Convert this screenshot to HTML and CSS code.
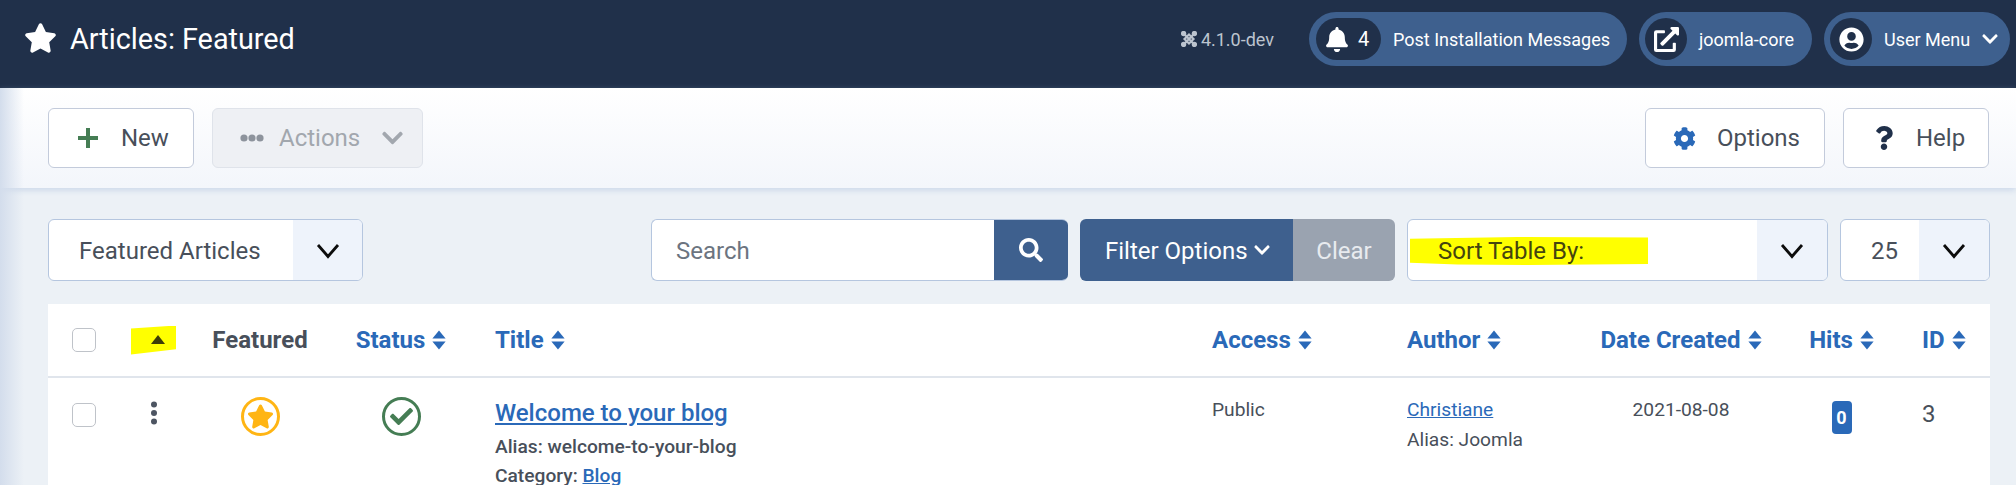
FILE: index.html
```html
<!DOCTYPE html>
<html lang="en">
<head>
<meta charset="utf-8">
<title>Articles: Featured</title>
<link rel="stylesheet" href="styles.css">
</head>
<body>
<svg class="defs" aria-hidden="true">
  <symbol id="i-star" viewBox="0 0 576 512"><path d="M259.3 17.8L194 150.2 47.9 171.5c-26.2 3.8-36.7 36.1-17.7 54.6l105.7 103-25 145.5c-4.5 26.3 23.2 46 46.4 33.7L288 439.6l130.7 68.7c23.2 12.2 50.9-7.4 46.4-33.7l-25-145.5 105.7-103c19-18.5 8.5-50.8-17.7-54.6L382 150.2 316.7 17.8c-11.7-23.6-45.6-23.9-57.4 0z"/></symbol>
  <symbol id="i-chev" viewBox="0 0 448 512"><path d="M207.029 381.476L12.686 187.132c-9.373-9.373-9.373-24.569 0-33.941l22.667-22.667c9.357-9.357 24.522-9.375 33.901-.04L224 284.505l154.745-154.021c9.379-9.335 24.544-9.317 33.901.04l22.667 22.667c9.373 9.373 9.373 24.569 0 33.941L240.971 381.476c-9.373 9.372-24.569 9.372-33.942 0z"/></symbol>
  <symbol id="i-thin" viewBox="0 0 24 16"><path d="M2 2L12 13.5L22 2"/></symbol>
  <symbol id="i-sort" viewBox="0 0 14 20"><path d="M7 0.5L13.6 8.5H0.4Z"/><path d="M0.4 11.5H13.6L7 19.5Z"/></symbol>
  <symbol id="i-caret" viewBox="0 0 16 20"><path d="M15 14H1L8 5Z"/></symbol>
</svg>

<header class="topbar">
  <svg class="title-star"><use href="#i-star"/></svg>
  <h1 class="page-title">Articles: Featured</h1>
  <div class="version">
    <svg class="joomla-mark" viewBox="0 0 16 16"><path d="M3.5 3.5L12.5 12.5M12.5 3.5L3.5 12.5M3.5 8L8 3.5L12.5 8L8 12.5Z"/><circle cx="2.6" cy="2.6" r="1.6"/><circle cx="13.4" cy="2.6" r="1.6"/><circle cx="2.6" cy="13.4" r="1.6"/><circle cx="13.4" cy="13.4" r="1.6"/></svg>
    <span>4.1.0-dev</span>
  </div>
  <a class="pill pill-post">
    <span class="pill-badge pill-badge-wide">
      <svg class="bell" viewBox="0 0 448 512"><path d="M224 512c35.32 0 63.97-28.65 63.97-64H160.03c0 35.35 28.65 64 63.97 64zm215.39-149.71c-19.32-20.76-55.47-51.99-55.47-154.29 0-77.7-54.48-139.9-127.94-155.16V32c0-17.67-14.32-32-31.98-32s-31.98 14.33-31.98 32v20.84C118.56 68.1 64.08 130.3 64.08 208c0 102.3-36.15 133.53-55.47 154.29-6 6.45-8.66 14.16-8.61 21.71.11 16.4 12.98 32 32.1 32h383.8c19.12 0 32-15.6 32.1-32 .05-7.55-2.61-15.27-8.61-21.71z"/></svg>
      <span class="count">4</span>
    </span>
    <span class="pill-label">Post Installation Messages</span>
  </a>
  <a class="pill pill-site">
    <span class="pill-badge">
      <svg class="pill-icon" viewBox="0 0 512 512"><path d="M432,320H400a16,16,0,0,0-16,16V448H64V128H208a16,16,0,0,0,16-16V80a16,16,0,0,0-16-16H48A48,48,0,0,0,0,112V464a48,48,0,0,0,48,48H400a48,48,0,0,0,48-48V336A16,16,0,0,0,432,320ZM488,0h-128c-21.37,0-32.05,25.91-17,41l35.73,35.73L135,320.37a24,24,0,0,0,0,34L157.67,377a24,24,0,0,0,34,0L435.28,133.32,471,169c15,15,41,4.5,41-17V24A24,24,0,0,0,488,0Z"/></svg>
    </span>
    <span class="pill-label">joomla-core</span>
  </a>
  <a class="pill pill-user">
    <span class="pill-badge">
      <svg class="pill-icon" viewBox="0 0 496 512"><path d="M248 8C111 8 0 119 0 256s111 248 248 248 248-111 248-248S385 8 248 8zm0 96c48.6 0 88 39.4 88 88s-39.4 88-88 88-88-39.4-88-88 39.4-88 88-88zm0 344c-58.7 0-111.3-26.6-146.5-68.2 18.8-35.4 55.6-59.8 98.5-59.8 2.4 0 4.8.4 7.1 1.1 13 4.2 26.6 6.9 40.9 6.9 14.3 0 28-2.7 40.9-6.9 2.3-.7 4.7-1.1 7.1-1.1 42.9 0 79.7 24.4 98.5 59.8C359.3 421.4 306.7 448 248 448z"/></svg>
    </span>
    <span class="pill-label">User Menu</span>
    <svg class="pill-chev"><use href="#i-chev"/></svg>
  </a>
</header>

<section class="toolbar">
  <button class="btn btn-new">
    <svg class="plus" viewBox="0 0 22 22"><path d="M11 1V21M1 11H21"/></svg>New
  </button>
  <button class="btn btn-actions">
    <svg class="dots" viewBox="0 0 24 8"><circle cx="4" cy="4" r="3.6"/><circle cx="12" cy="4" r="3.6"/><circle cx="20" cy="4" r="3.6"/></svg>Actions
    <svg class="actions-chev"><use href="#i-chev"/></svg>
  </button>
  <span class="toolbar-gap"></span>
  <button class="btn btn-options">
    <svg class="cog" viewBox="0 0 512 512"><path d="M487.4 315.7l-42.6-24.6c4.3-23.2 4.3-47 0-70.2l42.6-24.6c4.9-2.8 7.1-8.6 5.5-14-11.1-35.6-30-67.8-54.7-94.6-3.8-4.1-10-5.1-14.8-2.3L380.8 110c-17.9-15.4-38.5-27.3-60.8-35.1V25.8c0-5.6-3.9-10.5-9.4-11.7-36.7-8.2-74.3-7.8-109.2 0-5.5 1.2-9.4 6.1-9.4 11.7V75c-22.2 7.9-42.8 19.8-60.8 35.1L88.7 85.5c-4.9-2.8-11-1.9-14.8 2.3-24.7 26.7-43.6 58.9-54.7 94.6-1.7 5.4.6 11.2 5.5 14L67.3 221c-4.3 23.2-4.3 47 0 70.2l-42.6 24.6c-4.9 2.8-7.1 8.6-5.5 14 11.1 35.6 30 67.8 54.7 94.6 3.8 4.1 10 5.1 14.8 2.3l42.6-24.6c17.9 15.4 38.5 27.3 60.8 35.1v49.2c0 5.6 3.9 10.5 9.4 11.7 36.7 8.2 74.3 7.8 109.2 0 5.5-1.2 9.4-6.1 9.4-11.7v-49.2c22.2-7.9 42.8-19.8 60.8-35.1l42.6 24.6c4.9 2.8 11 1.9 14.8-2.3 24.7-26.7 43.6-58.9 54.7-94.6 1.5-5.5-.7-11.3-5.6-14.1zM256 336c-44.1 0-80-35.9-80-80s35.9-80 80-80 80 35.9 80 80-35.9 80-80 80z"/></svg>Options
  </button>
  <button class="btn btn-help">
    <svg class="question" viewBox="0 0 384 512"><path d="M202.021 0C122.202 0 70.503 32.703 29.914 91.026c-7.363 10.58-5.093 25.086 5.178 32.874l43.138 32.709c10.373 7.865 25.132 6.026 33.253-4.148 25.049-31.381 43.63-49.449 82.757-49.449 30.764 0 68.816 19.799 68.816 49.631 0 22.552-18.617 34.134-48.993 51.164-35.423 19.86-82.299 44.576-82.299 106.405V320c0 13.255 10.745 24 24 24h72.471c13.255 0 24-10.745 24-24v-5.773c0-42.86 125.268-44.645 125.268-160.627C377.504 66.256 286.902 0 202.021 0zM192 373.459c-38.196 0-69.271 31.075-69.271 69.271 0 38.195 31.075 69.27 69.271 69.27s69.271-31.075 69.271-69.271-31.075-69.27-69.271-69.27z"/></svg>Help
  </button>
</section>

<main class="content">
  <div class="filters">
    <div class="select select-view">
      <span class="select-text">Featured Articles</span>
      <span class="select-arrow select-arrow-view"><svg><use href="#i-thin"/></svg></span>
    </div>
    <span class="filters-gap"></span>
    <div class="search">
      <span class="search-text">Search</span>
      <span class="search-btn"><svg viewBox="0 0 512 512"><path d="M505 442.7L405.3 343c-4.5-4.5-10.6-7-17-7H372c27.6-35.3 44-79.7 44-128C416 93.1 322.9 0 208 0S0 93.1 0 208s93.1 208 208 208c48.3 0 92.7-16.4 128-44v16.3c0 6.4 2.5 12.5 7 17l99.7 99.7c9.4 9.4 24.6 9.4 33.9 0l28.3-28.3c9.4-9.4 9.4-24.6.1-34zM208 336c-70.7 0-128-57.2-128-128 0-70.7 57.2-128 128-128 70.7 0 128 57.2 128 128 0 70.7-57.2 128-128 128z"/></svg></span>
    </div>
    <div class="filter-group">
      <span class="filter-options">Filter Options<svg><use href="#i-chev"/></svg></span>
      <span class="filter-clear">Clear</span>
    </div>
    <div class="select select-sort">
      <span class="marked">Sort Table By:</span>
      <span class="select-arrow select-arrow-sort"><svg><use href="#i-thin"/></svg></span>
    </div>
    <div class="select select-limit">
      <span class="select-text limit-text">25</span>
      <span class="select-arrow select-arrow-limit"><svg><use href="#i-thin"/></svg></span>
    </div>
  </div>

  <table class="articles">
    <colgroup>
      <col class="c-check"><col class="c-order"><col class="c-featured"><col class="c-status"><col class="c-title"><col class="c-access"><col class="c-author"><col class="c-date"><col class="c-hits"><col class="c-id">
    </colgroup>
    <thead>
      <tr>
        <th><span class="check"></span></th>
        <th class="order-head"><span class="order-mark"><svg><use href="#i-caret"/></svg></span></th>
        <th class="center plain">Featured</th>
        <th class="center">Status<svg class="sort"><use href="#i-sort"/></svg></th>
        <th class="title-col">Title<svg class="sort"><use href="#i-sort"/></svg></th>
        <th>Access<svg class="sort"><use href="#i-sort"/></svg></th>
        <th>Author<svg class="sort"><use href="#i-sort"/></svg></th>
        <th class="center">Date Created<svg class="sort"><use href="#i-sort"/></svg></th>
        <th class="center">Hits<svg class="sort"><use href="#i-sort"/></svg></th>
        <th>ID<svg class="sort"><use href="#i-sort"/></svg></th>
      </tr>
    </thead>
    <tbody>
      <tr>
        <td class="cell-check"><span class="check"></span></td>
        <td class="cell-dots"><svg class="kebab" viewBox="0 0 8 24"><circle cx="4" cy="3.6" r="3"/><circle cx="4" cy="12" r="3"/><circle cx="4" cy="20.4" r="3"/></svg></td>
        <td class="center cell-icon"><span class="ring ring-star"><svg><use href="#i-star"/></svg></span></td>
        <td class="center cell-icon"><span class="ring ring-check"><svg viewBox="0 0 512 512"><path d="M173.898 439.404l-166.4-166.4c-9.997-9.997-9.997-26.206 0-36.204l36.203-36.204c9.997-9.998 26.207-9.998 36.204 0L192 312.69 432.095 72.596c9.997-9.997 26.207-9.997 36.204 0l36.203 36.204c9.997 9.997 9.997 26.206 0 36.204l-294.4 294.401c-9.998 9.997-26.207 9.997-36.204-.001z"/></svg></span></td>
        <td class="cell-title title-col">
          <a class="article-link">Welcome to your blog</a>
          <div class="meta">Alias: welcome-to-your-blog</div>
          <div class="meta">Category: <a class="meta-link">Blog</a></div>
        </td>
        <td class="cell-text">Public</td>
        <td class="cell-text">
          <a class="author-link">Christiane</a>
          <div class="author-alias">Alias: Joomla</div>
        </td>
        <td class="cell-text center">2021-08-08</td>
        <td class="center cell-hits"><span class="badge">0</span></td>
        <td class="cell-id">3</td>
      </tr>
    </tbody>
  </table>
</main>
</body>
</html>
```

FILE: styles.css
```css
* { box-sizing: border-box; }

html, body {
  height: 100%;
  overflow: hidden;
}

body {
  margin: 0;
  position: relative;
  background: #ecf1f6;
  color: #484f5a;
  font-family: Roboto, "Liberation Sans", sans-serif;
  font-size: 20px;
}

body::after {
  content: "";
  position: absolute;
  left: 0;
  top: 88px;
  bottom: 0;
  width: 24px;
  background: linear-gradient(to right, #d3ddec, rgba(225, 232, 243, 0));
  pointer-events: none;
}

.defs { display: none; }

svg { fill: currentColor; }

/* Top bar */
.topbar {
  height: 88px;
  background: #20304a;
  color: #fff;
  display: flex;
  align-items: center;
  padding: 0 6px 10px 24px;
}

.title-star {
  width: 33px;
  height: 30px;
  margin-bottom: 2px;
}

.page-title {
  margin: 0 auto 0 13px;
  font-size: 28.8px;
  font-weight: 400;
}

.version {
  display: flex;
  align-items: center;
  gap: 4px;
  margin-right: 35px;
  font-size: 18px;
  color: #bcc4cf;
}

.joomla-mark {
  width: 16px;
  height: 16px;
  stroke: #bcc4cf;
  stroke-width: 2.2;
  fill: #bcc4cf;
}

.joomla-mark path { fill: none; }

.pill {
  height: 54px;
  border-radius: 27px;
  background: #3e608e;
  color: #fff;
  display: flex;
  align-items: center;
  padding-left: 6px;
  margin-left: 12px;
  font-size: 18px;
}

.pill-post { width: 318px; margin-left: 0; padding-left: 7px; }
.pill-site { width: 173px; }
.pill-user { width: 186px; }

.pill-badge {
  width: 42px;
  height: 42px;
  border-radius: 21px;
  background: #20304a;
  display: flex;
  align-items: center;
  justify-content: center;
  flex: none;
}

.pill-badge-wide {
  width: 65px;
  justify-content: flex-start;
  padding-left: 10px;
}

.bell { width: 22px; height: 25px; }

.count {
  margin-left: 10px;
  font-size: 20px;
}

.pill-icon { width: 25px; height: 25px; }

.pill-label { margin-left: 12px; }

.pill-chev {
  width: 16px;
  height: 18px;
  margin-left: 12px;
}

/* Toolbar */
.toolbar {
  height: 100px;
  background: linear-gradient(#fff, #f3f6fb);
  box-shadow: 0 2px 6px rgba(150, 175, 215, 0.4);
  display: flex;
  align-items: flex-start;
  gap: 18px;
  padding: 20px 27px 0 48px;
  position: relative;
}

.toolbar-gap { flex: 1; }

.btn {
  height: 60px;
  padding: 0;
  display: flex;
  align-items: center;
  background: #fff;
  border: 1px solid #c3cbdb;
  border-radius: 6px;
  color: #484f5a;
  font: 400 24px Roboto, "Liberation Sans", sans-serif;
}

.btn-new { width: 146px; padding-left: 28px; }
.btn-actions {
  width: 211px;
  padding-left: 27px;
  background: #eef0f4;
  border-color: #dfe3ea;
  color: #a2a7ae;
}
.btn-options { width: 180px; padding-left: 27px; }
.btn-help { width: 146px; padding-left: 31px; }

.plus {
  width: 22px;
  height: 22px;
  margin-right: 22px;
  stroke: #457d54;
  stroke-width: 4;
  fill: none;
}

.dots {
  width: 24px;
  height: 8px;
  margin-right: 15px;
  fill: #8d939c;
}

.actions-chev {
  width: 25px;
  height: 24px;
  margin-left: 20px;
  fill: #a2a7ae;
}

.cog {
  width: 23px;
  height: 25px;
  margin-right: 21px;
  fill: #2a69b8;
}

.question {
  width: 18px;
  height: 26px;
  margin-right: 23px;
  fill: #20304a;
}

/* Filters */
.content { padding: 31px 26px 0 48px; }

.filters {
  height: 62px;
  display: flex;
  align-items: stretch;
  gap: 12px;
}

.filters-gap { flex: 1; }

.select {
  display: flex;
  align-items: center;
  background: #fff;
  border: 1px solid #b5c6df;
  border-radius: 6px;
  overflow: hidden;
  font-size: 24px;
}

.select-view { width: 315px; }
.select-sort { width: 421px; }
.select-limit { width: 150px; }

.select-text { padding: 2px 0 0 30px; flex: 1; }
.limit-text { padding-left: 30px; }

.select-arrow {
  height: 100%;
  background: #eef3fb;
  display: flex;
  align-items: center;
  justify-content: center;
  padding-top: 2px;
  color: #000;
}

.select-arrow svg {
  width: 24px;
  height: 16px;
  fill: none;
  stroke: #0c0c0c;
  stroke-width: 2.8;
}

.select-arrow-view { width: 69px; }
.select-arrow-sort { width: 70px; margin-left: auto; }
.select-arrow-limit { width: 70px; }

.marked {
  width: 238px;
  height: 28px;
  margin: 2px 0 0 2px;
  padding-left: 28px;
  display: flex;
  align-items: center;
  background: #ffff00;
  color: #45450f;
  clip-path: polygon(0 6%, 45% 0, 100% 2%, 100% 96%, 50% 100%, 20% 98%, 0 92%);
}

.search {
  width: 417px;
  display: flex;
  align-items: stretch;
  background: #fff;
  border: 1px solid #b5c6df;
  border-right: 0;
  border-radius: 6px;
  overflow: hidden;
  font-size: 24px;
  color: #6c7480;
}

.search-text {
  flex: 1;
  padding: 2px 0 0 24px;
  align-self: center;
}

.search-btn {
  width: 74px;
  margin: -1px 0;
  background: #3e608e;
  color: #fff;
  display: flex;
  align-items: center;
  justify-content: center;
}

.search-btn svg { width: 24px; height: 24px; }

.filter-group {
  width: 315px;
  display: flex;
  border-radius: 6px;
  overflow: hidden;
  color: #fff;
  font-size: 24px;
}

.filter-options {
  width: 213px;
  background: #3e608e;
  display: flex;
  align-items: center;
  padding: 2px 0 0 25px;
}

.filter-options svg {
  width: 16px;
  height: 18px;
  margin: -2px 0 0 6px;
}

.filter-clear {
  flex: 1;
  padding-top: 2px;
  background: #9aa3b0;
  color: #e8ebef;
  display: flex;
  align-items: center;
  justify-content: center;
}

/* Table */
.articles {
  width: 1942px;
  margin-top: 23px;
  background: #fff;
  border-collapse: collapse;
  table-layout: fixed;
}

.c-check { width: 72px; }
.c-order { width: 68px; }
.c-featured { width: 144px; }
.c-status { width: 138px; }
.c-title { width: 718px; }
.c-access { width: 195px; }
.c-author { width: 194px; }
.c-date { width: 208px; }
.c-hits { width: 113px; }
.c-id { width: 92px; }

th, td {
  padding: 0 0 0 24px;
  text-align: left;
  vertical-align: top;
}

th {
  height: 73px;
  vertical-align: middle;
  border-bottom: 2px solid #e0e5ec;
  color: #2a69b8;
  font-size: 24px;
  font-weight: 700;
  white-space: nowrap;
}

th.center, td.center {
  padding-left: 0;
  text-align: center;
}

th.title-col, td.title-col { padding-left: 25px; }

th.plain { color: #484f5a; }

.sort {
  width: 14px;
  height: 20px;
  margin-left: 7px;
  vertical-align: -2px;
}

.check {
  display: block;
  width: 24px;
  height: 24px;
  border: 1px solid #bfc3c9;
  border-radius: 5px;
  background: #fff;
}

th.order-head { padding-left: 11px; }

.order-mark {
  display: flex;
  align-items: center;
  justify-content: center;
  width: 45px;
  height: 29px;
  padding-left: 8px;
  background: #ffff00;
  color: #3c3c08;
  clip-path: polygon(0 10%, 100% 0, 100% 82%, 0 100%);
}

.order-mark svg { width: 16px; height: 20px; }

.cell-check { padding-top: 25px; }

.cell-dots {
  padding: 23px 0 0 30px;
  color: #4d5562;
}

.kebab { display: block; width: 8px; height: 24px; }

.cell-icon { padding-top: 19px; }

.ring {
  display: inline-flex;
  align-items: center;
  justify-content: center;
  width: 39px;
  height: 39px;
  border-radius: 50%;
  border: 3px solid;
}

.ring-star { color: #ffb514; }
.ring-star svg { width: 27px; height: 25px; }
.ring-check { color: #457d54; }
.ring-check svg { width: 23px; height: 23px; }

.cell-title { padding-top: 20px; }

.article-link {
  display: block;
  margin-bottom: 4px;
  color: #2a69b8;
  font-size: 24px;
  font-weight: 500;
  line-height: 30px;
  text-decoration: underline;
}

.meta {
  font-size: 19.2px;
  font-weight: 500;
  line-height: 29px;
}

.meta-link {
  color: #2a69b8;
  text-decoration: underline;
}

.cell-text {
  padding-top: 19px;
  font-size: 19.2px;
  line-height: 26px;
}

.author-link {
  color: #2a69b8;
  text-decoration: underline;
}

.author-alias { margin-top: 4px; }

.cell-hits { padding-top: 23px; }

.badge {
  display: inline-block;
  width: 20px;
  height: 33px;
  border-radius: 4px;
  background: #2a69b8;
  color: #fff;
  font-size: 18px;
  font-weight: 700;
  line-height: 33px;
  text-align: center;
}

.cell-id {
  padding-top: 22px;
  font-size: 24px;
  line-height: 28px;
}
```
